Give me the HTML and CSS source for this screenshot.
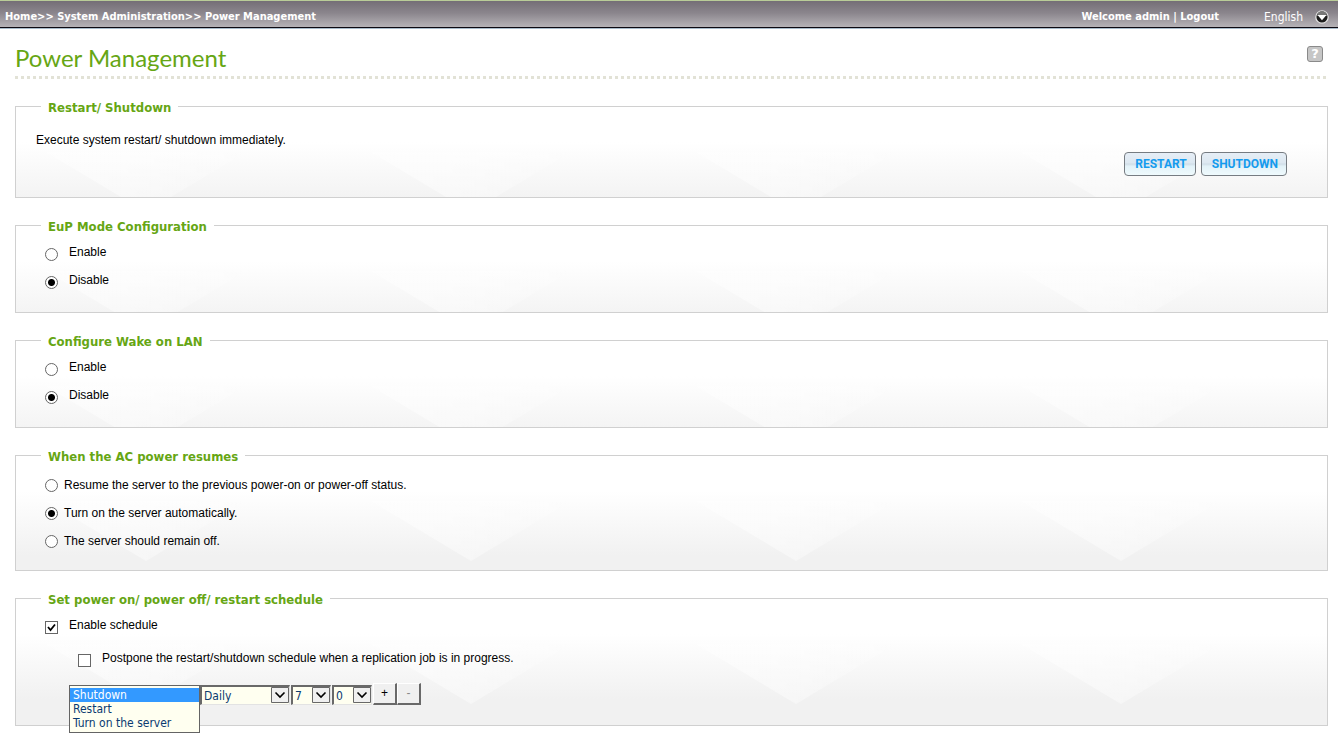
FILE: index.html
```html
<!DOCTYPE html>
<html lang="en">
<head>
<meta charset="utf-8">
<title>Power Management</title>
<link rel="stylesheet" href="styles.css">
</head>
<body>
<header class="topbar">
  <nav class="crumbs"><a href="#">Home</a>&gt;&gt; <a href="#">System Administration</a>&gt;&gt; <a href="#">Power Management</a></nav>
  <div class="account"><span>Welcome admin | <a href="#">Logout</a></span></div>
  <button class="language" type="button">English
    <svg width="14" height="14" viewBox="0 0 14 14" aria-hidden="true"><circle cx="7" cy="7" r="6.2" fill="#1c1c1c" stroke="#e8e8e8" stroke-width="1.2"/><path d="M2 6A5 5 0 0 1 12 6Z" fill="#777"/><path d="M2.6 5H11.4L7 10.2Z" fill="#fff"/></svg>
  </button>
</header>
<main class="page">
  <div class="title-row">
    <h1>Power Management</h1>
    <button class="help" type="button" aria-label="Help">?</button>
  </div>
  <svg class="dots" height="3" aria-hidden="true"><defs><pattern id="dot" width="6" height="3" patternUnits="userSpaceOnUse"><rect width="3" height="3" fill="#e2e2d6"/></pattern></defs><rect width="100%" height="3" fill="url(#dot)"/></svg>

  <form class="panels">
    <fieldset class="panel">
      <legend>Restart/ Shutdown</legend>
      <div class="immediate">
        <p>Execute system restart/ shutdown immediately.</p>
        <div class="actions">
          <button class="action" type="button">RESTART</button>
          <button class="action" type="button">SHUTDOWN</button>
        </div>
      </div>
    </fieldset>

    <fieldset class="panel">
      <legend>EuP Mode Configuration</legend>
      <div class="choices">
        <label class="choice"><input type="radio" name="eup">Enable</label>
        <label class="choice"><input type="radio" name="eup" checked>Disable</label>
      </div>
    </fieldset>

    <fieldset class="panel">
      <legend>Configure Wake on LAN</legend>
      <div class="choices">
        <label class="choice"><input type="radio" name="wol">Enable</label>
        <label class="choice"><input type="radio" name="wol" checked>Disable</label>
      </div>
    </fieldset>

    <fieldset class="panel">
      <legend>When the AC power resumes</legend>
      <div class="choices compact">
        <label class="choice"><input type="radio" name="ac">Resume the server to the previous power-on or power-off status.</label>
        <label class="choice"><input type="radio" name="ac" checked>Turn on the server automatically.</label>
        <label class="choice"><input type="radio" name="ac">The server should remain off.</label>
      </div>
    </fieldset>

    <fieldset class="panel">
      <legend>Set power on/ power off/ restart schedule</legend>
      <div class="schedule">
        <label class="choice"><input type="checkbox" checked>Enable schedule</label>
        <label class="choice nested"><input type="checkbox">Postpone the restart/shutdown schedule when a replication job is in progress.</label>
        <div class="rule">
          <div class="action-slot">
            <select class="action-list" size="3" aria-label="Action">
              <option selected>Shutdown</option>
              <option>Restart</option>
              <option>Turn on the server</option>
            </select>
          </div>
          <span class="drop wide"><select aria-label="Frequency"><option>Daily</option></select><svg viewBox="0 0 18 16" aria-hidden="true"><path d="M.5.5h17v15H.5z" fill="#f0f0f0" stroke="#686868"/><path d="M4.5 5.5L9 10l4.500-4.500" fill="none" stroke="#000" stroke-width="1.600"/></svg></span>
          <span class="drop"><select aria-label="Hour"><option>7</option></select><svg viewBox="0 0 18 16" aria-hidden="true"><path d="M.5.5h17v15H.5z" fill="#f0f0f0" stroke="#686868"/><path d="M4.5 5.5L9 10l4.500-4.500" fill="none" stroke="#000" stroke-width="1.600"/></svg></span>
          <span class="drop"><select aria-label="Minute"><option>0</option></select><svg viewBox="0 0 18 16" aria-hidden="true"><path d="M.5.5h17v15H.5z" fill="#f0f0f0" stroke="#686868"/><path d="M4.5 5.5L9 10l4.500-4.500" fill="none" stroke="#000" stroke-width="1.600"/></svg></span>
          <button class="step" type="button" aria-label="Add schedule">+</button>
          <button class="step" type="button" aria-label="Remove schedule" disabled>-</button>
        </div>
      </div>
    </fieldset>
  </form>
</main>
</body>
</html>
```
FILE: styles.css
```css
* { box-sizing: border-box; }

body {
  margin: 0;
  background: #fff;
  color: #000;
  font: 12px/16px "Liberation Sans", Arial, sans-serif;
}

button, select, input { margin: 0; font: inherit; }
a { color: inherit; text-decoration: none; }

.topbar {
  display: flex;
  align-items: center;
  height: 29px;
  padding: 4px 9px 0 5px;
  border-top: 1px solid #b9cc98;
  border-bottom: 1px solid #a9bccb;
  box-shadow: inset 0 -1px #0c0a12;
  background: linear-gradient(#746e76, #8b868d 45%, #b9b6ba);
  color: #fff;
  font: bold 11px/16px "DejaVu Sans Condensed", "DejaVu Sans", sans-serif;
}

.crumbs { flex: 1; }
.account { margin-right: 45px; }

.language {
  display: flex;
  align-items: center;
  gap: 12px;
  padding: 0;
  border: 0;
  background: none;
  color: #fff;
  font: 12px/16px "DejaVu Sans Condensed", "DejaVu Sans", sans-serif;
}

.page { padding: 14px 10px 11px 15px; }

.title-row {
  display: flex;
  align-items: flex-start;
  justify-content: space-between;
  padding-right: 5px;
}

h1 {
  margin: 0 0 2px;
  color: #66a614;
  font: 24px/30px Lato, sans-serif;
}

.help {
  width: 16px;
  height: 16px;
  margin-top: 3px;
  padding: 0;
  border: 1px solid #8a8a8a;
  border-radius: 3px;
  background: #c6c6c6;
  color: #fff;
  font: bold 13px/14px "DejaVu Sans", sans-serif;
}

.dots { display: block; width: 100%; margin: 1px 0 20px; }

.panels { display: flex; flex-direction: column; gap: 20px; }

.panel {
  min-width: 0;
  margin: 0;
  padding: 1px 0 0;
  border: 1px solid #d0d0d0;
  background:
    url("data:image/svg+xml,%3Csvg xmlns='http://www.w3.org/2000/svg' width='325' height='60'%3E%3Cdefs%3E%3ClinearGradient id='g' x1='0' x2='1' y1='0' y2='0'%3E%3Cstop offset='0' stop-color='white' stop-opacity='.5'/%3E%3Cstop offset='.5' stop-color='white' stop-opacity='.4'/%3E%3Cstop offset='1' stop-color='white' stop-opacity='.1'/%3E%3C/linearGradient%3E%3C/defs%3E%3Cpath d='M0 0L100 60L200 0Z' fill='url(%23g)'/%3E%3C/svg%3E") 30px 45px repeat-x,
    linear-gradient(#fff 35px, #f1f1f1 100px);
}

legend {
  margin-left: 25px;
  padding: 2px 7px 0;
  color: #66a614;
  font: bold 13px/13px "DejaVu Sans Condensed", "DejaVu Sans", sans-serif;
}

.immediate { padding: 17px 40px 21px 20px; }
.immediate p { margin: 0 0 4px; }
.actions { display: flex; justify-content: flex-end; gap: 5px; }

.action {
  height: 24px;
  padding: 0 8px 0 10px;
  border: 1px solid #767c82;
  border-radius: 4px;
  background: linear-gradient(#e6eef6, #dde8f1 45%, #d0dde7 50%, #e3f2f8 60%, #effafd);
  color: #149bee;
  font: bold 12px/20px Roboto, sans-serif;
}

.choices { padding: 4px 29px 18px; }
.compact { padding: 7px 29px 15px; }

.choice {
  display: flex;
  align-items: center;
  gap: 11px;
  min-height: 28px;
}

.choice input {
  flex: none;
  appearance: none;
  width: 13px;
  height: 13px;
  margin-top: 5px;
  border: 1px solid #666;
  background: #fff;
}

.choice input[type="radio"] { border-radius: 50%; }
.choice input[type="radio"]:checked { background: radial-gradient(circle, #000 3px, #fff 4px); }
.choice input[type="checkbox"]:checked {
  background: #fff url("data:image/svg+xml,%3Csvg xmlns='http://www.w3.org/2000/svg' width='11' height='11'%3E%3Cpath d='M2 5l2.5 3L9 2.5' fill='none' stroke='black' stroke-width='1.8'/%3E%3C/svg%3E");
}

.compact .choice { gap: 6px; }
.compact input { margin-top: 0; }

.schedule { padding: 4px 29px 20px; }
.nested { margin: 5px 0 0 33px; }

.rule { display: flex; align-items: flex-end; margin: 11px 0 0 24px; }

.action-slot { position: relative; width: 131px; height: 20px; }

.action-list {
  position: absolute;
  top: 0;
  left: 0;
  z-index: 1;
  width: 131px;
  height: 48px;
  padding: 2px 0;
  overflow: hidden;
  border: 1px solid #646464;
  border-radius: 0;
  outline: 0;
  background: #fffff0;
  color: #0b3b70;
  font: 12px/14px "DejaVu Sans Condensed", "DejaVu Sans", sans-serif;
}

.action-list option { min-height: 14px; padding: 0 3px; line-height: 14px; }
.action-list option:checked {
  background: linear-gradient(#3399ff, #3399ff);
  color: #fff;
}

.drop { position: relative; display: block; width: 40px; height: 20px; margin-right: 1px; }
.wide { width: 90px; }

.drop select {
  appearance: none;
  width: 100%;
  height: 20px;
  padding: 0 20px 0 2px;
  border: 2px solid #696969;
  border-right: 1px solid #e3e3e3;
  border-bottom: 1px solid #e3e3e3;
  border-radius: 0;
  background: #fffff0;
  color: #0b3b70;
  font: 12px/16px "DejaVu Sans Condensed", "DejaVu Sans", sans-serif;
}

.drop svg {
  position: absolute;
  top: 2px;
  right: 1px;
  width: 18px;
  height: 16px;
  pointer-events: none;
}

.step {
  width: 24px;
  height: 22px;
  padding: 0 0 1px;
  border: 1px solid #fff;
  border-right: 2px solid #696969;
  border-bottom: 2px solid #696969;
  background: #f0f0f0;
  color: #000;
}

.step:disabled { color: #8a8a8a; }
```
